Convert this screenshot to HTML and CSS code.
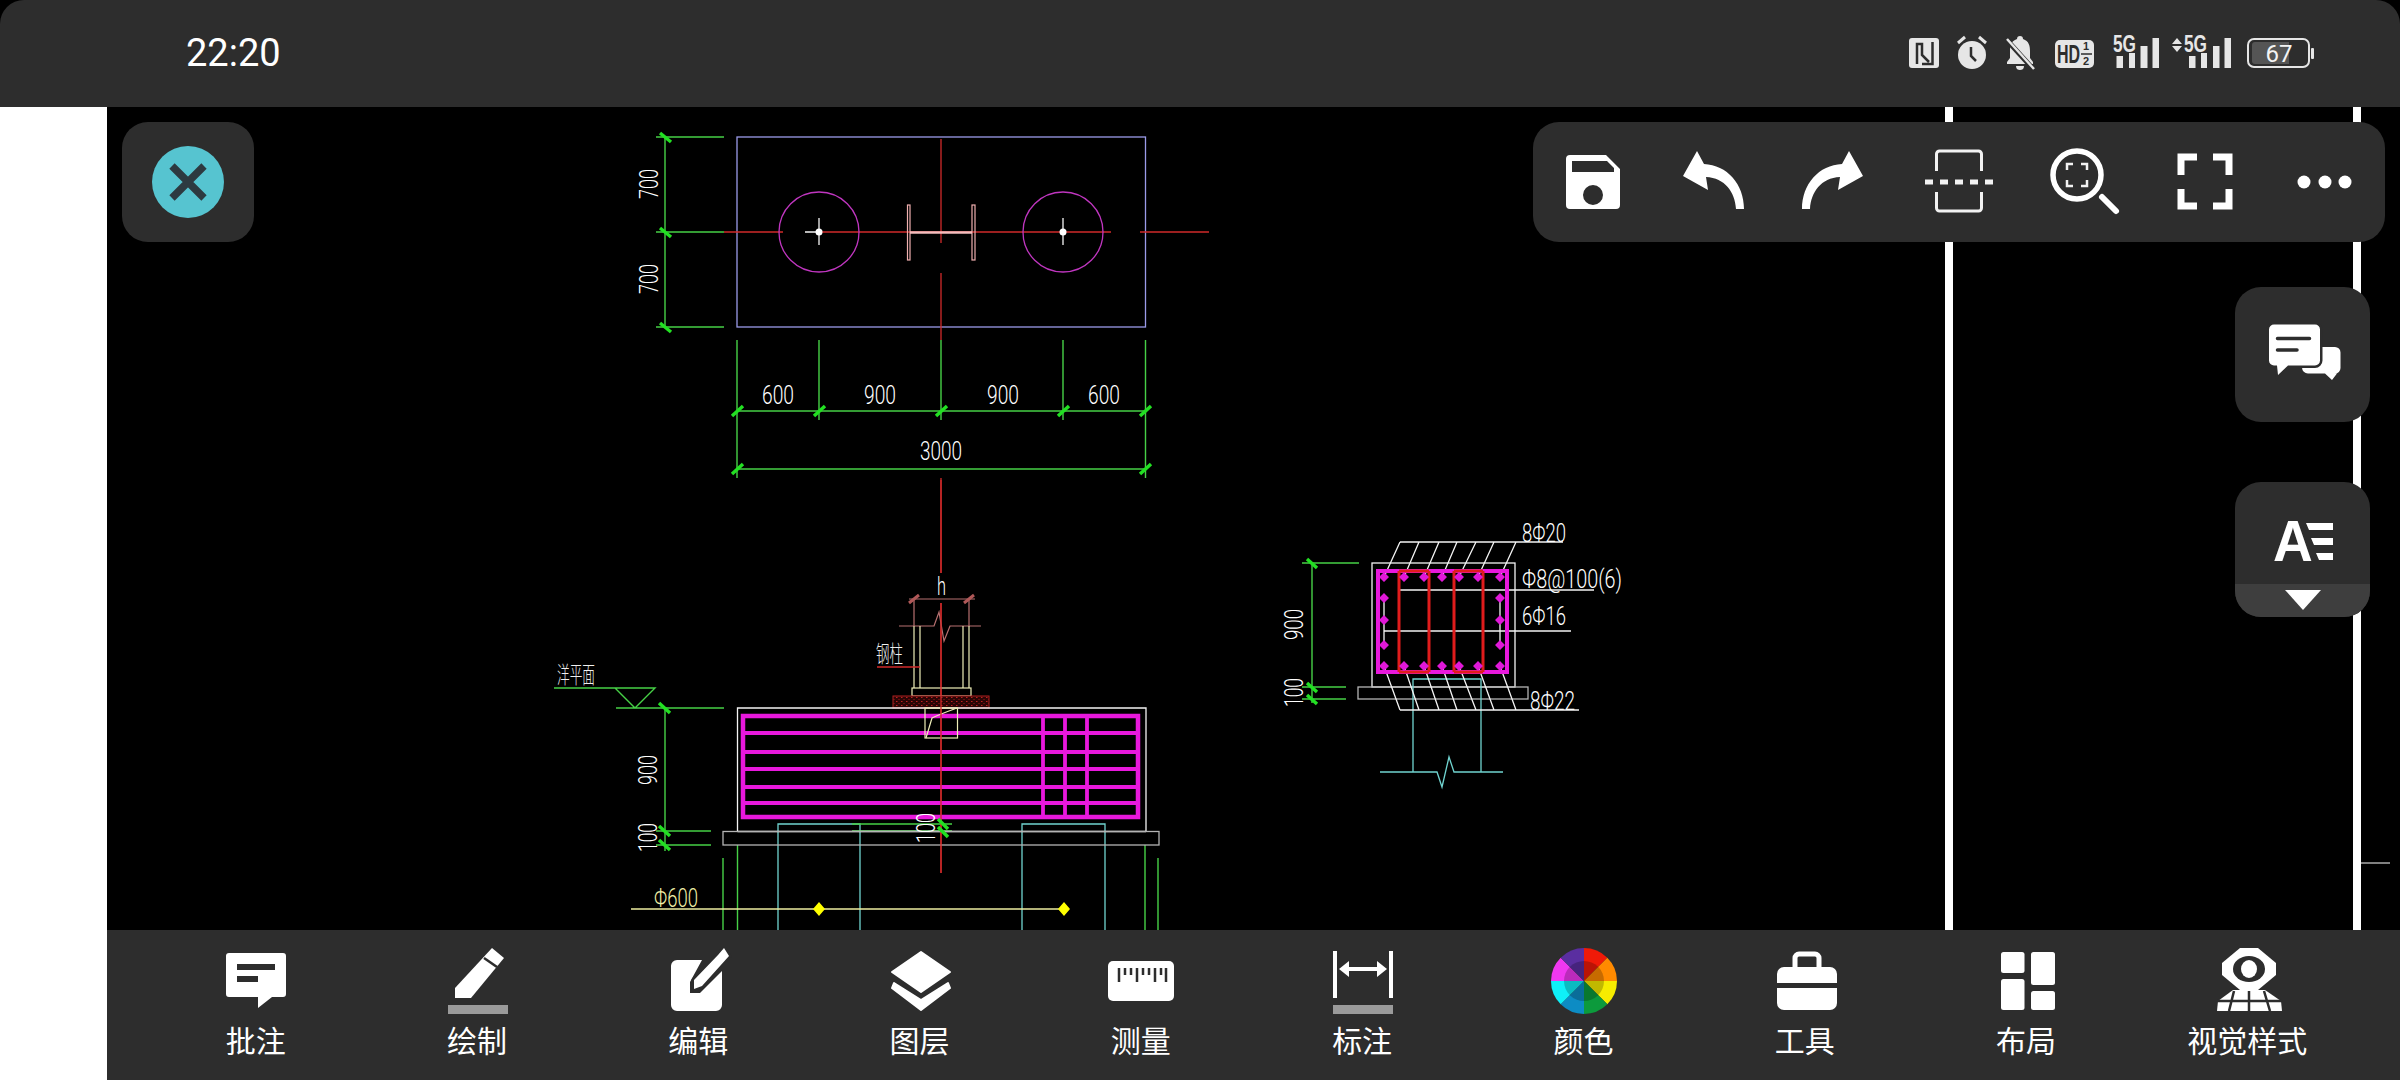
FILE: index.html
```html
<!DOCTYPE html>
<html lang="zh-CN">
<head>
<meta charset="utf-8">
<title>CAD 看图</title>
<link rel="stylesheet" href="styles.css">
</head>
<body>
<header class="statusbar">
  <div class="clock">22:20</div>
  <div class="status-icons">
    <svg class="si w30" viewBox="0 -6 30 42"><rect y="3" width="30" height="30" rx="3" class="lt"/><path class="nfc" d="M8 29V9H13V20L20 27M23.500 7V29H13"/></svg>
    <svg class="si w32" viewBox="0 -6 32 42"><circle cx="16" cy="20" r="14" class="lt"/><path class="hand" d="M15 12V21L20 26"/><path class="ear" d="M2 8L9 2M30 8L23 2"/></svg>
    <svg class="si w30" viewBox="0 -6 30 42"><path class="lt" d="M15 1c2 0 3 1 3 3 6 2 7 7 7 12v7l3 4v2H2v-2l3-4v-7c0-5 1-10 7-12 0-2 1-3 3-3zM11 31h8c0 3-2 4-4 4s-4-1-4-4z"/><path class="slash-bg" d="M0 3L30 36"/><path class="slash" d="M2 4L29 34"/></svg>
    <svg class="si w39" viewBox="0 -6 39 42"><rect y="5" width="39" height="28" rx="5" class="lt"/><text class="hd" transform="translate(2 28) scale(.64 1)">HD</text><text x="28" y="15" class="hd-s">1</text><path class="frac" d="M26 19H37"/><text x="28" y="30" class="hd-s">2</text></svg>
    <svg class="si w46" viewBox="0 -6 46 42"><text class="fg" transform="translate(0 17) scale(.75 1)">5G</text><path class="lt" d="M3.500 21h6.500v12H3.500zM16 18h6v15h-6zM27.500 11h7v22h-7zM39.500 3h6.500v30h-6.500z"/></svg>
    <svg class="si w59" viewBox="0 -6 59 42"><path class="lt" d="M5 3L10 9H0zM5 17L0 11H10z"/><text class="fg" transform="translate(12 17) scale(.75 1)">5G</text><path class="lt" d="M17 21h6.500v12H17zM29 18h6v15h-6zM41 11h6.500v22H41zM52.500 3H59v30h-6.500z"/></svg>
    <svg class="si w67" viewBox="0 -6 67 42"><rect x="1" y="4" width="61" height="28" rx="6" class="batt"/><path class="batt-fill" d="M8 7H42V29H8a3 3 0 0 1-3-3V10a3 3 0 0 1 3-3z"/><rect x="64" y="13" width="3" height="11" rx="1" class="lt"/><text x="32" y="27" class="batt-t" text-anchor="middle">67</text></svg>
  </div>
</header>

<div class="body-row">
  <div class="gutter"></div>
  <div class="workspace">
    <main class="canvas">
      <svg class="drawing" viewBox="107 107 2293 823">
        <defs>
          <pattern id="stip" width="5" height="4" patternUnits="userSpaceOnUse"><rect width="5" height="4" fill="#2a0505"/><rect x="1" y="1" width="1.500" height="1" fill="#c02020"/><rect x="3.500" y="3" width="1" height="1" fill="#a01818"/></pattern>
        </defs>

        <!-- sheet edges -->
        <path class="sheet" d="M1949 107V930M2357 107V930"/>
        <path class="thin-w" d="M2361 863H2390"/>

        <!-- plan -->
        <rect x="737" y="137" width="408.500" height="190" class="ln-lav"/>
        <path class="ln-red" d="M941 139V243M941 273V340M941 478V573M941 603V873M724 232H783M820 232H1111M1140 232H1209"/>
        <path class="ln-grn" d="M656 137H724M656 232H724M656 327H724M665 137V327"/>
        <circle cx="819" cy="232" r="40" class="ln-pur"/>
        <circle cx="1063" cy="232" r="40" class="ln-pur"/>
        <path class="ln-w" d="M819 218V245M1063 218V245M805 232H816"/>
        <circle cx="819" cy="232" r="3.500" class="f-w"/>
        <circle cx="1063" cy="232" r="3.500" class="f-w"/>
        <rect x="907.500" y="205" width="2.500" height="55" class="ln-pink"/>
        <rect x="972" y="205" width="3" height="55" class="ln-pink"/>
        <path class="web" d="M910 232.500H972"/>

        <path class="ln-grn" d="M737 340V478M819 340V420M941 340V420M1063 340V420M1145.500 340V478M737 411H1145.500M737 469H1145.500"/>
        <path class="tick" d="M660 133L671 142M660 228L671 237M660 323L671 332"/>
        <path class="tick" d="M732 416L743 406M814 416L825 406M936 416L947 406M1058 416L1069 406M1140 416L1151 406M732 474L743 464M1140 474L1151 464"/>

        <text class="cad" transform="translate(658 199) rotate(-90)" textLength="30" lengthAdjust="spacingAndGlyphs">700</text>
        <text class="cad" transform="translate(658 294) rotate(-90)" textLength="30" lengthAdjust="spacingAndGlyphs">700</text>
        <text class="cad" x="762" y="404" textLength="32" lengthAdjust="spacingAndGlyphs">600</text>
        <text class="cad" x="864" y="404" textLength="32" lengthAdjust="spacingAndGlyphs">900</text>
        <text class="cad" x="987" y="404" textLength="32" lengthAdjust="spacingAndGlyphs">900</text>
        <text class="cad" x="1088" y="404" textLength="32" lengthAdjust="spacingAndGlyphs">600</text>
        <text class="cad" x="920" y="460" textLength="42" lengthAdjust="spacingAndGlyphs">3000</text>

        <!-- elevation -->
        <text class="cad" x="937" y="595" textLength="9" lengthAdjust="spacingAndGlyphs">h</text>
        <path class="ln-rose" d="M909 599H975M914 599V626M969 599V626M899 626H934L939 612L944 641L950 626H981"/>
        <path class="tick-rose" d="M909 603L919 595M964 603L974 595"/>
        <path class="ln-cream" d="M914 626V688M969 626V688M920 626V688M963 626V688"/>
        <rect x="912" y="688" width="59" height="8" class="ln-cream"/>
        <rect x="893" y="696" width="96" height="12" class="grout"/>
        <text class="cad-cn" x="876" y="662" textLength="27" lengthAdjust="spacingAndGlyphs">钢柱</text>
        <path class="ln-red" d="M877 667H920"/>
        <text class="cad-cn" x="557" y="683" textLength="38" lengthAdjust="spacingAndGlyphs">洋平面</text>
        <path class="ln-grn" d="M554 688H655L635 708L615 688M616 708H724"/>

        <path class="ln-w" d="M737.500 832V708H1146V832"/>
        <g class="rebar">
          <rect x="743" y="716" width="395" height="101"/>
          <path class="rebar-in" d="M743 733H1138M743 752H1138M743 769H1138M743 787H1138M743 803H1138M1043 716V817M1065 716V817M1087 716V817"/>
        </g>
        <rect x="925" y="708" width="32.500" height="30" class="ln-cream"/>
        <path class="ln-cream" d="M926 738L932 718Q938 715 957 708"/>

        <path class="ln-cyan" d="M778 930V824H860V930M1022 930V824H1105V930"/>
        <path class="ln-grn" d="M852 824H952M852 831H952M665 708V851M656 831H711M656 845H711M723 858V930M737.500 845V930M1145 845V930M1158 858V930"/>
        <path class="ln-w" d="M737.500 831.500H1146"/>
        <rect x="723" y="831.500" width="436" height="13.500" class="ln-gray"/>
        <path class="ln-red" d="M941 480V573M941 603V873"/>
        <path class="tick" d="M659 703L670 713M659 826L670 836M659 840L670 850M938 819L948 829M938 827L948 837"/>
        <text class="cad" transform="translate(657 785) rotate(-90)" textLength="30" lengthAdjust="spacingAndGlyphs">900</text>
        <text class="cad" transform="translate(657 852) rotate(-90)" textLength="29" lengthAdjust="spacingAndGlyphs">100</text>
        <text class="cad" transform="translate(935 843) rotate(-90)" textLength="30" lengthAdjust="spacingAndGlyphs">100</text>
        <text class="cad cad-y" x="654" y="907" textLength="44" lengthAdjust="spacingAndGlyphs">Φ600</text>
        <path class="ln-yel" d="M631 909H1064"/>
        <path class="f-yel" d="M819 902L825 909L819 916L813 909ZM1064 902L1070 909L1064 916L1058 909Z"/>

        <!-- section -->
        <path class="ln-grn" d="M1312 563V703M1302 563H1359M1302 687H1346M1302 699H1346"/>
        <path class="tick" d="M1307 559L1317 568M1307 683L1317 692M1307 695L1317 704"/>
        <text class="cad" transform="translate(1303 640) rotate(-90)" textLength="31" lengthAdjust="spacingAndGlyphs">900</text>
        <text class="cad" transform="translate(1303 707) rotate(-90)" textLength="29" lengthAdjust="spacingAndGlyphs">100</text>
        <rect x="1372" y="563" width="143" height="124" class="ln-w"/>
        <rect x="1358" y="687" width="170" height="12" class="ln-gray"/>
        <path class="ln-cyan" d="M1413 772V679H1481V772M1380 772H1437L1442 787L1449 757L1454 772H1503"/>
        <path class="ln-w" d="M1400 542H1563M1400 710H1579M1399 590H1594M1384 631H1571M1384 598V645M1500 598V645M1384 577L1400 542M1404 577L1419 542M1424 577L1439 542M1442 577L1457 542M1459 577L1476 542M1478 577L1494 542M1500 577L1516 542M1384 666L1400 710M1404 666L1419 710M1424 666L1439 710M1442 666L1457 710M1459 666L1476 710M1478 666L1494 710M1500 666L1516 710"/>
        <rect x="1378" y="571" width="129" height="101" class="stirrup"/>
        <path class="red-bar" d="M1399 571V672M1429 571V672M1454 571V672M1483 571V672M1399 571H1429M1399 672H1429M1454 571H1483M1454 672H1483"/>
        <g class="dots">
          <path d="M1384 572L1389 577L1384 582L1379 577ZM1404 572L1409 577L1404 582L1399 577ZM1424 572L1429 577L1424 582L1419 577ZM1442 572L1447 577L1442 582L1437 577ZM1459 572L1464 577L1459 582L1454 577ZM1478 572L1483 577L1478 582L1473 577ZM1500 572L1505 577L1500 582L1495 577Z"/>
          <path d="M1384 661L1389 666L1384 671L1379 666ZM1404 661L1409 666L1404 671L1399 666ZM1424 661L1429 666L1424 671L1419 666ZM1442 661L1447 666L1442 671L1437 666ZM1459 661L1464 666L1459 671L1454 666ZM1478 661L1483 666L1478 671L1473 666ZM1500 661L1505 666L1500 671L1495 666Z"/>
          <path d="M1384 593L1389 598L1384 603L1379 598ZM1384 615L1389 620L1384 625L1379 620ZM1384 640L1389 645L1384 650L1379 645ZM1500 593L1505 598L1500 603L1495 598ZM1500 615L1505 620L1500 625L1495 620ZM1500 640L1505 645L1500 650L1495 645Z"/>
        </g>
        <text class="cad" x="1522" y="542" textLength="44" lengthAdjust="spacingAndGlyphs">8Φ20</text>
        <text class="cad" x="1522" y="588" textLength="100" lengthAdjust="spacingAndGlyphs">Φ8@100(6)</text>
        <text class="cad" x="1522" y="625" textLength="44" lengthAdjust="spacingAndGlyphs">6Φ16</text>
        <text class="cad" x="1530" y="710" textLength="45" lengthAdjust="spacingAndGlyphs">8Φ22</text>
      </svg>

      <button class="float close-btn">
        <svg class="ic72" viewBox="0 0 72 72"><circle cx="36" cy="36" r="36" class="close-c"/><path class="close-x" d="M20 20L52 52M52 20L20 52"/></svg>
      </button>

      <nav class="float toolbar">
        <svg class="ic72" viewBox="0 0 72 72"><path class="f-w" fill-rule="evenodd" d="M13 9H49L63 23V59a4 4 0 0 1-4 4H13a4 4 0 0 1-4-4V13a4 4 0 0 1 4-4zM15 15V26H57V22L50 15zM36 39a10 10 0 1 0 0 20a10 10 0 1 0 0-20z"/></svg>
        <svg class="ic72" viewBox="0 0 72 72"><path class="f-w" d="M20 5L6 30L31 44L29 31C48 32 58 46 59 63H67C67 38 50 19 27 18Z"/></svg>
        <svg class="ic72" viewBox="0 0 72 72"><path class="f-w" d="M52 5L66 30L41 44L43 31C24 32 14 46 13 63H5C5 38 22 19 45 18Z"/></svg>
        <svg class="ic72 tb-wide" viewBox="0 0 72 72"><path class="st3" d="M13.500 25V8a3 3 0 0 1 3-3H55.500a3 3 0 0 1 3 3V25M13.500 46V62a3 3 0 0 0 3 3H55.500a3 3 0 0 0 3-3V46"/><path class="dash" d="M2 36H70"/></svg>
        <svg class="ic72 tb-wide" viewBox="0 0 72 72"><circle cx="28" cy="29" r="24" class="st4"/><path class="st2" d="M18 24V18H24M32 18H38V24M18 34V40H24M32 40H38V34"/><path class="st6" d="M53 51L67 65"/></svg>
        <svg class="ic72" viewBox="0 0 72 72"><path class="st7" d="M28 11H12V29M44 11H60V29M12 43V60H28M60 43V60H44"/></svg>
        <svg class="ic72" viewBox="0 0 72 72"><circle cx="15" cy="36" r="6.500" class="f-w"/><circle cx="36" cy="36" r="6.500" class="f-w"/><circle cx="56" cy="36" r="6.500" class="f-w"/></svg>
      </nav>

      <button class="float side-btn chat-btn">
        <svg class="ic-chat" viewBox="0 0 80 64"><path class="f-w" d="M40 24H72a5.500 5.500 0 0 1 5.500 5.500V45a5.500 5.500 0 0 1-5.500 5.500H74L69 57L62 50.500H45a6 6 0 0 1-6-6z"/><path class="bubble" d="M11 1.500H52a5 5 0 0 1 5 5V37.500a5 5 0 0 1-5 5H25L15 52L14 42.500H11a5 5 0 0 1-5-5V6.500a5 5 0 0 1 5-5z"/><path class="chat-l" d="M14.500 15.500H46.500M14.500 27H34"/></svg>
      </button>

      <button class="float side-btn style-btn">
        <span class="style-top"><span class="style-a">A</span><svg class="ic-lines" viewBox="0 0 27 41"><path class="f-w" d="M0 2H27V9H3zM5 17H27V24H8zM10 32H27V39H13z"/></svg></span>
        <span class="style-down"><span class="tri"></span></span>
      </button>
    </main>

    <footer class="bottombar">
      <div class="tab"><svg class="tab-ic" viewBox="0 0 80 68"><path class="f-w" d="M13 6H67a3 3 0 0 1 3 3V47a3 3 0 0 1-3 3H56L42 61V50H13a3 3 0 0 1-3-3V9a3 3 0 0 1 3-3z"/><path class="dk5" d="M21 20H59M21 32H42"/></svg><span class="tab-l">批注</span></div>
      <div class="tab"><svg class="tab-ic" viewBox="0 0 80 68"><path class="f-w" d="M55 1L67 11L34 51H18V41z"/><path class="dk2" d="M47 11L60 20"/><rect x="11" y="58" width="60" height="9" class="bar"/></svg><span class="tab-l">绘制</span></div>
      <div class="tab"><svg class="tab-ic" viewBox="0 0 80 68"><path class="f-w" d="M19 13H44L32 35V46H42L64 24V58a6 6 0 0 1-6 6H19a6 6 0 0 1-6-6V19a6 6 0 0 1 6-6z"/><path class="pen" d="M60 8L66 1L71 9L44 39L36 42L36 33z"/></svg><span class="tab-l">编辑</span></div>
      <div class="tab"><svg class="tab-ic" viewBox="0 0 80 68"><path class="round-f" d="M41 5L70 25L41 45L12 25z"/><path class="round-f" d="M14 36L41 53L68 36L70 41L41 63L12 41z"/></svg><span class="tab-l">图层</span></div>
      <div class="tab"><svg class="tab-ic" viewBox="0 0 80 68"><rect x="7" y="14" width="66" height="40" rx="5" class="f-w"/><path class="dk2" d="M18 21V35M24 21V28M30 21V28M36 21V35M42 21V28M48 21V28M54 21V35M60 21V28M65 21V35"/></svg><span class="tab-l">测量</span></div>
      <div class="tab"><svg class="tab-ic" viewBox="0 0 80 68"><path class="w4" d="M13 4V51M69 4V51M24 22H58"/><path class="f-w" d="M17 22L27 14V30zM65 22L55 14V30z"/><rect x="11" y="58" width="60" height="9" class="bar"/></svg><span class="tab-l">标注</span></div>
      <div class="tab"><svg class="tab-ic" viewBox="0 0 80 68">
        <path fill="#ef1a08" d="M41 34V1A33 33 0 0 1 64.300 10.700z"/><path fill="#ff8a00" d="M41 34L64.300 10.700A33 33 0 0 1 74 34z"/><path fill="#f6ec00" d="M41 34H74A33 33 0 0 1 64.300 57.300z"/><path fill="#0c9a3c" d="M41 34L64.300 57.300A33 33 0 0 1 41 67z"/><path fill="#0d8cc4" d="M41 34V67A33 33 0 0 1 17.700 57.300z"/><path fill="#0ff0f8" d="M41 34L17.700 57.300A33 33 0 0 1 8 34z"/><path fill="#f038f0" d="M41 34H8A33 33 0 0 1 17.700 10.700z"/><path fill="#5a2ea0" d="M41 34L17.700 10.700A33 33 0 0 1 41 1z"/>
        <circle cx="41" cy="34" r="20" class="wheel-in"/></svg><span class="tab-l">颜色</span></div>
      <div class="tab"><svg class="tab-ic" viewBox="0 0 80 68"><path class="w5" d="M30 20V11a4 4 0 0 1 4-4H50a4 4 0 0 1 4 4V20"/><path class="f-w" d="M19 20H65a7 7 0 0 1 7 7V36H12V27a7 7 0 0 1 7-7zM12 41H72V56a7 7 0 0 1-7 7H19a7 7 0 0 1-7-7z"/></svg><span class="tab-l">工具</span></div>
      <div class="tab"><svg class="tab-ic" viewBox="0 0 80 68"><rect x="15" y="5" width="23.500" height="21" rx="2.500" class="f-w"/><rect x="15" y="32" width="23.500" height="31" rx="2.500" class="f-w"/><rect x="45" y="5" width="24" height="33" rx="2.500" class="f-w"/><rect x="45" y="44" width="24" height="19" rx="2.500" class="f-w"/></svg><span class="tab-l">布局</span></div>
      <div class="tab"><svg class="tab-ic" viewBox="0 0 80 68"><path class="f-w" d="M33 1H51L69 16V28L51 43H33L15 28V16z"/><ellipse cx="42" cy="22" rx="16" ry="13" class="f-dk"/><ellipse cx="42" cy="22" rx="8" ry="9" class="f-w"/><path class="f-w" d="M26 43H58L74 54L75 64H10L11 54z"/><path class="dk2" d="M10 54H75M27 44L22 64M42 44V64M57 44L63 64"/></svg><span class="tab-l">视觉样式</span></div>
    </footer>
  </div>
</div>
</body>
</html>
```

FILE: styles.css
```css
* { box-sizing: border-box; }
html, body { margin: 0; padding: 0; }
body {
  width: 2400px;
  height: 1080px;
  overflow: hidden;
  background: #000;
  color: #fff;
  font-family: "Noto Sans CJK SC", "Noto Sans", sans-serif;
}

/* status bar */
.statusbar {
  height: 107px;
  background: #2d2d2d;
  border-radius: 24px 24px 0 0;
  display: flex;
  align-items: center;
  justify-content: space-between;
  padding: 0 86px 1px 186px;
}
.clock { font: 400 38px/1 Roboto, sans-serif; color: #fff; }
.status-icons { display: flex; align-items: center; margin-top: -6px; }
.si { height: 42px; display: block; }
.w30 { width: 30px; margin-right: 17px; }
.w32 { width: 32px; margin-right: 17px; }
.w39 { width: 39px; margin-right: 19px; margin-left: 3px; }
.w46 { width: 46px; margin-right: 13px; }
.w59 { width: 59px; margin-right: 16px; }
.w67 { width: 67px; }
.lt { fill: #e6e6e6; }
.nfc { fill: none; stroke: #2d2d2d; stroke-width: 2.500; }
.hand { fill: none; stroke: #2d2d2d; stroke-width: 2.500; }
.ear { fill: none; stroke: #e6e6e6; stroke-width: 3; }
.slash-bg { stroke: #2d2d2d; stroke-width: 5; }
.slash { stroke: #e6e6e6; stroke-width: 2.500; }
.hd { font: 700 25px "Liberation Sans", sans-serif; fill: #2d2d2d; }
.hd-s { font: 700 11px "Liberation Sans", sans-serif; fill: #2d2d2d; }
.frac { stroke: #2d2d2d; stroke-width: 1.500; }
.fg { font: 700 23px "Liberation Sans", sans-serif; fill: #e6e6e6; }
.batt { fill: none; stroke: #e6e6e6; stroke-width: 2; }
.batt-fill { fill: #555; }
.batt-t { font: 400 24px Roboto, sans-serif; fill: #f4f4f4; }

/* main frame */
.body-row { display: flex; height: 973px; }
.gutter { width: 107px; background: #fff; }
.workspace { flex: 1; display: flex; flex-direction: column; min-width: 0; }
.canvas { position: relative; flex: 1; background: #000; overflow: hidden; }
.drawing { position: absolute; left: 0; top: 0; width: 2293px; height: 823px; display: block; }

/* cad */
.sheet { fill: none; stroke: #fff; stroke-width: 8; }
.thin-w { fill: none; stroke: #fff; stroke-width: 1; }
.ln-lav { fill: none; stroke: #9a9ae8; stroke-width: 1.300; }
.ln-red { fill: none; stroke: #d02a2a; stroke-width: 1.300; }
.ln-grn { fill: none; stroke: #46d046; stroke-width: 1.400; }
.ln-pur { fill: none; stroke: #c036c0; stroke-width: 1.300; }
.ln-w { fill: none; stroke: #f4f4f4; stroke-width: 1.300; }
.ln-pink { fill: none; stroke: #f0b0b0; stroke-width: 1.200; }
.web { fill: none; stroke: #f4bcbc; stroke-width: 2.500; }
.ln-rose { fill: none; stroke: #b87070; stroke-width: 1.200; }
.ln-cream { fill: none; stroke: #efefb8; stroke-width: 1.200; }
.ln-cyan { fill: none; stroke: #70d4d0; stroke-width: 1.300; }
.ln-gray { fill: none; stroke: #b4b4b4; stroke-width: 1.300; }
.ln-yel { fill: none; stroke: #eeeea0; stroke-width: 1.300; }
.f-yel { fill: #ffff00; }
.tick { fill: none; stroke: #22e022; stroke-width: 3.500; }
.tick-rose { fill: none; stroke: #b05858; stroke-width: 3; }
.grout { fill: url(#stip); stroke: #b02020; stroke-width: 1; }
.rebar rect { fill: none; stroke: #e818dc; stroke-width: 4.500; }
.rebar-in { fill: none; stroke: #e818dc; stroke-width: 3.800; }
.stirrup { fill: none; stroke: #e818dc; stroke-width: 4; }
.red-bar { fill: none; stroke: #e01c1c; stroke-width: 3; }
.dots path { fill: #e018d8; }
.cad { font: 300 26px Roboto, "Liberation Sans", sans-serif; fill: #fff; }
.cad-y { fill: #f0f0a8; }
.cad-cn { font: 300 23px "Noto Sans CJK SC", sans-serif; fill: #f0f0f0; }

/* overlays */
.float { position: absolute; background: #2d2d2d; border: 0; padding: 0; color: #fff; }
.close-btn {
  left: 15px; top: 15px; width: 132px; height: 120px; border-radius: 26px;
  display: flex; align-items: center; justify-content: center;
}
.ic72 { width: 72px; height: 72px; display: block; flex: none; }
.close-c { fill: #56c4d0; }
.close-x { fill: none; stroke: #2d3a40; stroke-width: 7.500; }
.toolbar {
  right: 15px; top: 15px; width: 852px; height: 120px; border-radius: 26px;
  display: flex; align-items: center; padding-left: 24px; gap: 48px;
}
.tb-wide { margin-left: 6px; }
.f-w { fill: #fff; }
.f-dk { fill: #2d2d2d; }
.st3 { fill: none; stroke: #f2f2f2; stroke-width: 3; }
.st4 { fill: none; stroke: #fff; stroke-width: 5.500; }
.st2 { fill: none; stroke: #f2f2f2; stroke-width: 2.500; }
.st6 { fill: none; stroke: #fff; stroke-width: 6; stroke-linecap: round; }
.st7 { fill: none; stroke: #fff; stroke-width: 7; }
.dash { fill: none; stroke: #f2f2f2; stroke-width: 5; stroke-dasharray: 8 7; }

.side-btn { right: 30px; width: 135px; height: 135px; border-radius: 26px; overflow: hidden; }
.chat-btn { top: 180px; display: flex; align-items: center; justify-content: center; }
.ic-chat { width: 80px; height: 64px; display: block; }
.bubble { fill: #fff; stroke: #2d2d2d; stroke-width: 5; paint-order: stroke; }
.chat-l { fill: none; stroke: #2d2d2d; stroke-width: 3.500; stroke-linecap: round; }
.style-btn { top: 375px; display: flex; flex-direction: column; }
.style-top { height: 102px; display: flex; align-items: flex-end; justify-content: center; padding-bottom: 22px; }
.style-a { font: 700 58px/42px "Liberation Sans", sans-serif; color: #fff; height: 42px; transform: scaleX(.95); }
.ic-lines { width: 27px; height: 41px; margin-left: -7px; display: block; }
.style-down { flex: 1; background: #3e3e3e; display: flex; justify-content: center; padding-top: 6px; }
.tri { width: 0; height: 0; border-left: 18px solid transparent; border-right: 18px solid transparent; border-top: 20px solid #fff; }

/* bottom bar */
.bottombar {
  height: 150px;
  background: #2d2d2d;
  display: grid;
  grid-template-columns: repeat(10, 221.300px);
  padding: 17px 0 0 38px;
}
.tab { display: flex; flex-direction: column; align-items: center; }
.tab-ic { width: 80px; height: 68px; display: block; }
.tab-l { font: 400 30px/40px "Noto Sans CJK SC", sans-serif; color: #fff; margin-top: 4px; white-space: nowrap; }
.dk5 { fill: none; stroke: #2d2d2d; stroke-width: 6; }
.dk2 { fill: none; stroke: #2d2d2d; stroke-width: 2.500; }
.bar { fill: #9a9a9a; }
.pen { fill: #fff; stroke: #2d2d2d; stroke-width: 5; paint-order: stroke; stroke-linejoin: round; }
.round-f { fill: #fff; stroke: #fff; stroke-width: 2; stroke-linejoin: round; }
.w4 { fill: none; stroke: #fff; stroke-width: 4; }
.w5 { fill: none; stroke: #fff; stroke-width: 5; }
.wheel-in { fill: #000; fill-opacity: .22; }
```
